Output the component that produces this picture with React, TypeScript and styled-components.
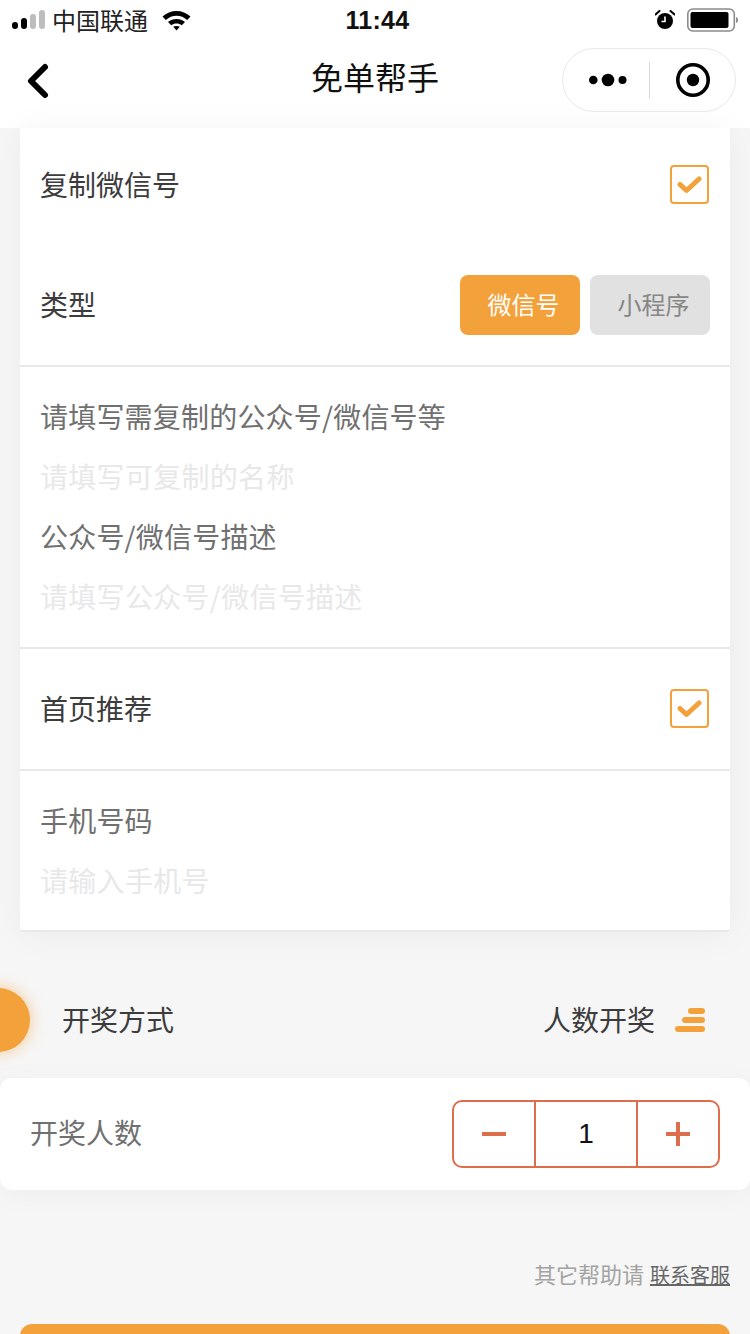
import React from 'react';
import styled, { createGlobalStyle } from 'styled-components';

const ORANGE = '#f3a13a';
const CORAL = '#dd6e4c';

const GlobalStyle = createGlobalStyle`
  html, body {
    margin: 0;
    padding: 0;
    background: #f6f6f6;
  }
  * {
    box-sizing: border-box;
  }
`;

const Page = styled.div`
  width: 750px;
  height: 1334px;
  overflow: hidden;
  position: relative;
  background: #f6f6f6;
  font-family: "Noto Sans CJK SC", "Liberation Sans", sans-serif;
`;

const Header = styled.div`
  height: 128px;
  background: #fff;
`;

const StatusBar = styled.div`
  height: 40px;
  display: grid;
  grid-template-columns: 1fr auto 1fr;
  align-items: center;
  padding: 0 12px;
  color: #000;
`;

const StatusLeft = styled.div`
  display: flex;
  align-items: center;
  font-size: 24px;
  color: #222;
`;

const Carrier = styled.span`
  margin: 0 14px 0 7px;
  line-height: 40px;
`;

const Clock = styled.div`
  margin: 1px 0 0 5px;
  font-family: "Liberation Sans", sans-serif;
  font-size: 25px;
  font-weight: 700;
  letter-spacing: 0.3px;
  color: #111;
`;

const StatusRight = styled.div`
  display: flex;
  align-items: center;
  justify-content: flex-end;
  gap: 12px;
`;

const NavBar = styled.div`
  height: 88px;
  position: relative;
  padding-bottom: 16px;
  display: flex;
  align-items: center;
  justify-content: center;
`;

const BackButton = styled.div`
  position: absolute;
  left: 26px;
  top: 22px;
  display: flex;
`;

const NavTitle = styled.div`
  font-size: 32px;
  line-height: 1;
  color: #111;
`;

const Capsule = styled.div`
  position: absolute;
  right: 14px;
  top: 8px;
  width: 174px;
  height: 64px;
  border: 1px solid #e9e9e9;
  border-radius: 32px;
  display: grid;
  grid-template-columns: 86px 1px 1fr;
  align-items: center;
`;

const CapsuleCell = styled.div<{ $nudge?: number }>`
  padding-left: ${p => p.$nudge || 0}px;
  display: flex;
  align-items: center;
  justify-content: center;
`;

const CapsuleDivider = styled.div`
  height: 37px;
  background: #d9d9d9;
`;

const Card = styled.div`
  margin: 0 20px;
  background: #fff;
  box-shadow: 0 2px 36px rgba(0, 0, 0, 0.05);
  border-bottom: 2px solid #e8e8e8;
  border-radius: 0 0 4px 4px;
`;

const Section = styled.div<{ $padded?: boolean; $last?: boolean }>`
  padding: ${p => (p.$last ? '20px 20px 19px' : p.$padded ? '20px' : '0 20px')};
  border-bottom: ${p => (p.$last ? 'none' : '2px solid #e8e8e8')};
`;

const CheckRow = styled.div<{ $height: number }>`
  height: ${p => p.$height}px;
  display: flex;
  align-items: center;
  justify-content: space-between;
`;

const TypeRow = styled.div`
  height: 123px;
  padding-top: 33px;
  display: flex;
  align-items: flex-start;
  justify-content: space-between;
`;

const Label = styled.div<{ $tone?: 'dark' | 'mid' | 'faint' }>`
  font-size: 28px;
  height: 60px;
  line-height: 59px;
  white-space: nowrap;
  letter-spacing: ${p => (p.$tone === 'faint' ? '0.3px' : p.$tone === 'mid' ? '0.2px' : '0')};
  color: ${p => (p.$tone === 'faint' ? '#e8e8e8' : p.$tone === 'mid' ? '#707070' : '#3c3c3c')};
`;

const Checkbox = styled.div`
  width: 39px;
  height: 39px;
  margin: 0 1px 1px 0;
  border: 2.5px solid ${ORANGE};
  border-radius: 4px;
  display: flex;
  align-items: center;
  justify-content: center;
`;

const TypeButtons = styled.div`
  display: flex;
  gap: 10px;
`;

const TypeButton = styled.div<{ $active?: boolean }>`
  width: 120px;
  height: 60px;
  padding: 0 0 4px 7px;
  border-radius: 8px;
  font-size: 24px;
  display: flex;
  align-items: center;
  justify-content: center;
  background: ${p => (p.$active ? ORANGE : '#e1e1e1')};
  color: ${p => (p.$active ? '#fff' : '#868686')};
`;

const DrawRow = styled.div`
  height: 146px;
  position: relative;
  padding: 27px 45px 0 62px;
  display: flex;
  align-items: center;
  justify-content: space-between;
  font-size: 28px;
  color: #3c3c3c;
`;

const Dot = styled.div`
  position: absolute;
  left: -34px;
  top: 56px;
  width: 64px;
  height: 64px;
  border-radius: 50%;
  background: ${ORANGE};
  box-shadow: 0 0 16px rgba(243, 161, 58, 0.55);
`;

const DrawValue = styled.div`
  display: flex;
  align-items: center;
  gap: 20px;
`;

const BarsSlot = styled.div`
  display: flex;
  padding-top: 3px;
`;

const CountCard = styled.div`
  height: 112px;
  padding: 0 30px;
  background: #fff;
  border-radius: 12px;
  box-shadow: 0 4px 30px rgba(0, 0, 0, 0.04);
  display: flex;
  align-items: center;
  justify-content: space-between;
`;

const CountLabel = styled.div`
  font-size: 28px;
  padding-bottom: 4px;
  color: #707070;
`;

const Stepper = styled.div`
  width: 268px;
  height: 68px;
  border: 2px solid ${CORAL};
  border-radius: 10px;
  display: grid;
  grid-template-columns: 80px 104px 1fr;
`;

const StepCell = styled.div<{ $divided?: boolean }>`
  display: flex;
  align-items: center;
  justify-content: center;
  font-family: "Liberation Sans", sans-serif;
  font-size: 28px;
  color: #111;
  border-left: ${p => (p.$divided ? `2px solid ${CORAL}` : 'none')};
  border-right: ${p => (p.$divided ? `2px solid ${CORAL}` : 'none')};
`;

const Help = styled.div`
  margin-top: 67px;
  padding-right: 20px;
  display: flex;
  justify-content: flex-end;
  align-items: baseline;
  gap: 6px;
  font-size: 22px;
  line-height: 32px;
  color: #a3a3a3;
`;

const HelpLink = styled.span`
  font-size: 20px;
  color: #666;
  text-decoration: underline;
`;

const Submit = styled.div`
  margin: 33px 20px 0;
  height: 60px;
  border-radius: 12px 12px 0 0;
  background: ${ORANGE};
`;

const Check = () => (
  <svg width="25" height="18" viewBox="0 0 25 18">
    <path d="M3 8.5 L9.5 14.5 L22 3" fill="none" stroke={ORANGE} strokeWidth="5" strokeLinecap="round" strokeLinejoin="round" />
  </svg>
);

const Signal = () => (
  <svg width="33" height="20" viewBox="0 0 33 20">
    <rect x="0" y="12" width="6" height="7" rx="3" fill="#000" />
    <rect x="9" y="8" width="6" height="11" rx="3" fill="#000" />
    <rect x="18" y="4" width="6" height="15" rx="3" fill="#bdbdbd" />
    <rect x="27" y="0" width="6" height="19" rx="3" fill="#bdbdbd" />
  </svg>
);

const Wifi = () => (
  <svg width="29" height="21" viewBox="0 0 29 21">
    <path d="M0.5 6.5 C8 -1 21 -1 28.5 6.5 L25.2 10 C19 4.3 10 4.3 3.8 10 Z" fill="#000" />
    <path d="M6 12 C10.5 8 18.5 8 23 12 L19.8 15.3 C16.5 12.8 12.5 12.8 9.2 15.3 Z" fill="#000" />
    <path d="M11.2 16.8 C13 15.6 16 15.6 17.8 16.8 L14.5 20.5 Z" fill="#000" />
  </svg>
);

const Alarm = () => (
  <svg width="20" height="20" viewBox="0 0 20 20">
    <circle cx="10" cy="11" r="8" fill="#000" />
    <path d="M10 6.5 V11.5 H6.5" fill="none" stroke="#fff" strokeWidth="1.6" />
    <path d="M0.5 4.5 L4.5 1 M19.5 4.5 L15.5 1" stroke="#000" strokeWidth="2" strokeLinecap="round" />
  </svg>
);

const Battery = () => (
  <svg width="51" height="24" viewBox="0 0 51 24">
    <rect x="0.8" y="1" width="46.5" height="22" rx="5" fill="none" stroke="#8c8c8c" strokeWidth="1.6" />
    <rect x="3.5" y="4" width="38" height="16" rx="2" fill="#000" />
    <path d="M49 9 C50.5 9.5 51 10.5 51 12 C51 13.5 50.5 14.5 49 15 Z" fill="#8c8c8c" />
  </svg>
);

const Back = () => (
  <svg width="26" height="38" viewBox="0 0 26 38">
    <path d="M19 5 L5 19 L19 33" fill="none" stroke="#000" strokeWidth="6" strokeLinecap="round" strokeLinejoin="round" />
  </svg>
);

const MoreDots = () => (
  <svg width="38" height="14" viewBox="0 0 38 14">
    <circle cx="4.3" cy="7" r="4.3" fill="#000" />
    <circle cx="19" cy="7" r="6.3" fill="#000" />
    <circle cx="33.5" cy="7" r="4" fill="#000" />
  </svg>
);

const Target = () => (
  <svg width="34" height="34" viewBox="0 0 34 34">
    <circle cx="17" cy="17" r="15.2" fill="none" stroke="#000" strokeWidth="3.6" />
    <circle cx="17" cy="17" r="6.2" fill="#000" />
  </svg>
);

const Bars = () => (
  <svg width="30" height="24" viewBox="0 0 30 24">
    <rect x="13" y="0" width="17" height="6" rx="3" fill={ORANGE} />
    <rect x="7" y="9" width="23" height="6" rx="3" fill={ORANGE} />
    <rect x="0" y="18" width="30" height="6" rx="3" fill={ORANGE} />
  </svg>
);

const Minus = () => (
  <svg width="24" height="4" viewBox="0 0 24 4">
    <rect width="24" height="4" fill={CORAL} />
  </svg>
);

const Plus = () => (
  <svg width="24" height="24" viewBox="0 0 24 24">
    <path d="M0 10 H10 V0 H14 V10 H24 V14 H14 V24 H10 V14 H0 Z" fill={CORAL} />
  </svg>
);

export default function App() {
  return (
    <Page>
      <GlobalStyle />
      <Header>
        <StatusBar>
          <StatusLeft>
            <Signal />
            <Carrier>中国联通</Carrier>
            <Wifi />
          </StatusLeft>
          <Clock>11:44</Clock>
          <StatusRight>
            <Alarm />
            <Battery />
          </StatusRight>
        </StatusBar>
        <NavBar>
          <BackButton>
            <Back />
          </BackButton>
          <NavTitle>免单帮手</NavTitle>
          <Capsule>
            <CapsuleCell $nudge={3}>
              <MoreDots />
            </CapsuleCell>
            <CapsuleDivider />
            <CapsuleCell>
              <Target />
            </CapsuleCell>
          </Capsule>
        </NavBar>
      </Header>

      <Card>
        <Section>
          <CheckRow $height={114}>
            <Label>复制微信号</Label>
            <Checkbox>
              <Check />
            </Checkbox>
          </CheckRow>
          <TypeRow>
            <Label>类型</Label>
            <TypeButtons>
              <TypeButton $active>微信号</TypeButton>
              <TypeButton>小程序</TypeButton>
            </TypeButtons>
          </TypeRow>
        </Section>
        <Section $padded>
          <Label $tone="mid">请填写需复制的公众号/微信号等</Label>
          <Label $tone="faint">请填写可复制的名称</Label>
          <Label $tone="mid">公众号/微信号描述</Label>
          <Label $tone="faint">请填写公众号/微信号描述</Label>
        </Section>
        <Section>
          <CheckRow $height={120}>
            <Label>首页推荐</Label>
            <Checkbox>
              <Check />
            </Checkbox>
          </CheckRow>
        </Section>
        <Section $padded $last>
          <Label $tone="mid">手机号码</Label>
          <Label $tone="faint">请输入手机号</Label>
        </Section>
      </Card>

      <DrawRow>
        <Dot />
        <span>开奖方式</span>
        <DrawValue>
          <span>人数开奖</span>
          <BarsSlot>
            <Bars />
          </BarsSlot>
        </DrawValue>
      </DrawRow>

      <CountCard>
        <CountLabel>开奖人数</CountLabel>
        <Stepper>
          <StepCell>
            <Minus />
          </StepCell>
          <StepCell $divided>1</StepCell>
          <StepCell>
            <Plus />
          </StepCell>
        </Stepper>
      </CountCard>

      <Help>
        其它帮助请
        <HelpLink>联系客服</HelpLink>
      </Help>
      <Submit />
    </Page>
  );
}
